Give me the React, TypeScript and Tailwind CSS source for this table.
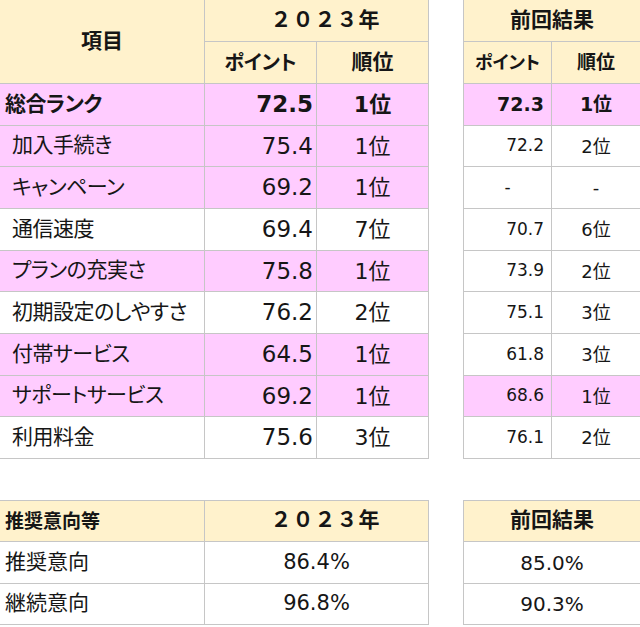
import React from 'react'

type Row = {
  label: string
  pts: string
  rank: string
  pink: boolean
  prevPts: string
  prevRank: string
  prevPink: boolean
  bold?: boolean
}

const rows: Row[] = [
  { label: '総合ランク', pts: '72.5', rank: '1位', pink: true, prevPts: '72.3', prevRank: '1位', prevPink: true, bold: true },
  { label: '加入手続き', pts: '75.4', rank: '1位', pink: true, prevPts: '72.2', prevRank: '2位', prevPink: false },
  { label: 'キャンペーン', pts: '69.2', rank: '1位', pink: true, prevPts: '-', prevRank: '-', prevPink: false },
  { label: '通信速度', pts: '69.4', rank: '7位', pink: false, prevPts: '70.7', prevRank: '6位', prevPink: false },
  { label: 'プランの充実さ', pts: '75.8', rank: '1位', pink: true, prevPts: '73.9', prevRank: '2位', prevPink: false },
  { label: '初期設定のしやすさ', pts: '76.2', rank: '2位', pink: false, prevPts: '75.1', prevRank: '3位', prevPink: false },
  { label: '付帯サービス', pts: '64.5', rank: '1位', pink: true, prevPts: '61.8', prevRank: '3位', prevPink: false },
  { label: 'サポートサービス', pts: '69.2', rank: '1位', pink: true, prevPts: '68.6', prevRank: '1位', prevPink: true },
  { label: '利用料金', pts: '75.6', rank: '3位', pink: false, prevPts: '76.1', prevRank: '2位', prevPink: false },
]

const intent = [
  { label: '推奨意向', now: '86.4%', prev: '85.0%' },
  { label: '継続意向', now: '96.8%', prev: '90.3%' },
]

const cream = 'bg-[#fff2cc]'
const palt = "[font-feature-settings:'palt']"
const rowsTpl = 'grid-rows-[41px_41px_41px_40px_41px_41px_40px_41px_41px_40px_41px]'

export default function App() {
  return (
    <div className="h-[627px] w-[640px] overflow-hidden bg-white font-['DejaVu_Sans','Noto_Sans_CJK_JP',sans-serif] text-[#161616]">
      <div className="flex">
        {/* 2023 table */}
        <div className={`grid grid-cols-[204px_111px_111px] ${rowsTpl} gap-px bg-[#c6c6c6] pr-px pb-px`}>
          <div className={`${cream} row-span-2 flex items-center justify-center text-[21px] font-bold`}>項目</div>
          <div className={`${cream} col-span-2 flex items-center justify-center pl-[18px] text-[21px] font-bold tracking-[1px]`}>２０２３年</div>
          <div className={`${cream} ${palt} flex items-center justify-center text-[20px] font-bold`}>ポイント</div>
          <div className={`${cream} flex items-center justify-center text-[21px] font-bold`}>順位</div>
          {rows.map((r) => {
            const bg = r.pink ? 'bg-[#ffccff]' : 'bg-white'
            return (
              <React.Fragment key={r.label}>
                <div className={`${bg} ${palt} flex items-center text-[21px] tracking-[-0.5px] ${r.bold ? 'pl-[5px] font-bold' : 'pl-[12px]'}`}>{r.label}</div>
                <div className={`${bg} flex items-center justify-end pr-[3px] text-[23px] ${r.bold ? 'font-bold' : ''}`}>{r.pts}</div>
                <div className={`${bg} flex items-center justify-center text-[22px] ${r.bold ? 'font-bold' : ''}`}>{r.rank}</div>
              </React.Fragment>
            )
          })}
        </div>

        {/* previous result table */}
        <div className={`ml-[34px] grid grid-cols-[87px_88px] ${rowsTpl} gap-px bg-[#c6c6c6] px-px pb-px`}>
          <div className={`${cream} col-span-2 flex items-center justify-center text-[21px] font-bold`}>前回結果</div>
          <div className={`${cream} ${palt} flex items-center justify-center text-[18px] font-bold`}>ポイント</div>
          <div className={`${cream} flex items-center justify-center text-[19px] font-bold`}>順位</div>
          {rows.map((r) => {
            const bg = r.prevPink ? 'bg-[#ffccff]' : 'bg-white'
            const dash = r.prevPts === '-'
            return (
              <React.Fragment key={r.label}>
                <div className={`${bg} flex items-center ${dash ? 'justify-center' : 'justify-end pr-[7px]'} ${r.bold ? 'text-[19px] font-bold' : 'text-[17px]'}`}>{r.prevPts}</div>
                <div className={`${bg} flex items-center justify-center ${r.bold ? 'text-[19px] font-bold' : 'text-[18px]'}`}>{r.prevRank}</div>
              </React.Fragment>
            )
          })}
        </div>
      </div>

      {/* intent tables */}
      <div className="mt-[41px] flex">
        <div className="grid grid-cols-[204px_223px] grid-rows-[40px_41px_40px] gap-px bg-[#c6c6c6] pt-px pr-px pb-px">
          <div className={`${cream} ${palt} flex items-center pl-[5px] text-[19px] font-bold`}>推奨意向等</div>
          <div className={`${cream} flex items-center justify-center pl-[18px] text-[21px] font-bold tracking-[1px]`}>２０２３年</div>
          {intent.map((r) => (
            <React.Fragment key={r.label}>
              <div className="flex items-center bg-white pl-[5px] text-[21px]">{r.label}</div>
              <div className="flex items-center justify-center bg-white text-[21px]">{r.now}</div>
            </React.Fragment>
          ))}
        </div>

        <div className="ml-[34px] grid grid-cols-[176px] grid-rows-[40px_41px_40px] gap-px bg-[#c6c6c6] p-px">
          <div className={`${cream} flex items-center justify-center text-[21px] font-bold`}>前回結果</div>
          {intent.map((r) => (
            <div key={r.label} className="flex items-center justify-center bg-white text-[20px]">{r.prev}</div>
          ))}
        </div>
      </div>
    </div>
  )
}
